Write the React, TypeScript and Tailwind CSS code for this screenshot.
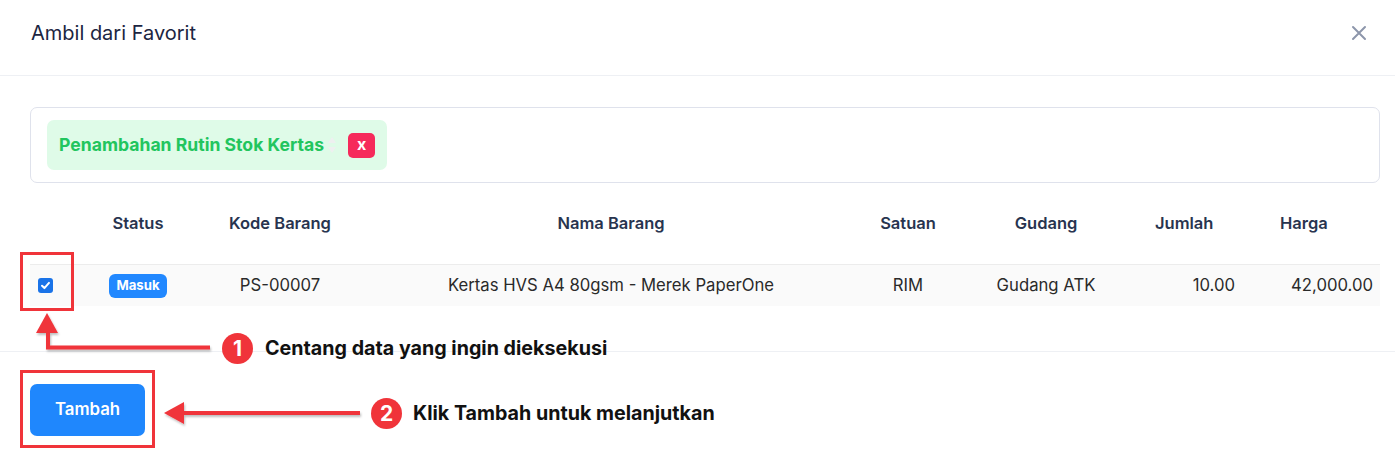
import React from 'react';

const font = { fontFamily: 'Inter, "Noto Sans", sans-serif' };

const Check = () => (
  <div className="w-[15px] h-[15px] rounded-[3px] bg-[#1a73e8] flex items-center justify-center">
    <svg width="11" height="11" viewBox="0 0 12 12">
      <path d="M2.2 6.3 L4.8 8.8 L9.8 3.2" fill="none" stroke="#fff" strokeWidth="2.2" strokeLinecap="round" strokeLinejoin="round" />
    </svg>
  </div>
);

const Step = ({ n }: { n: number }) => (
  <div className="w-[31px] h-[31px] rounded-full bg-[#f0343a] text-white flex items-center justify-center text-[21px] font-bold leading-none">
    {n}
  </div>
);

export default function App() {
  return (
    <div className="relative w-full h-[455px] bg-white overflow-hidden" style={font}>
      {/* header */}
      <div className="h-[76px] border-b border-[#eef0f4] flex items-start justify-between pl-[31px] pr-[27px] pt-[19px]">
        <h2 className="text-[20px] leading-[28px] text-[#1c2541]">Ambil dari Favorit</h2>
        <svg width="18" height="18" viewBox="0 0 18 18" className="mt-[5px]">
          <path d="M3 3 L15 15 M15 3 L3 15" stroke="#8d96ab" strokeWidth="2" strokeLinecap="round" />
        </svg>
      </div>

      {/* body */}
      <div className="pl-[30px] pr-[15px] pt-[31px]">
        <div className="h-[76px] rounded-[7px] border border-[#dfe2ec] pl-[16px] pt-[12px]">
          <div className="inline-flex items-center h-[50px] rounded-[7px] bg-[#dffbe8] pl-[12px] pr-[12px]">
            <span className="text-[17.6px] font-bold text-[#22c55e]">Penambahan Rutin Stok Kertas</span>
            <svg width="10" height="20" viewBox="0 0 10 20" className="ml-[3px] mr-[11px]">
              <path d="M5 2 L9 8 L1 8 Z M5 18 L9 12 L1 12 Z" fill="#eef0f0" />
            </svg>
            <button className="w-[27px] h-[25px] rounded-[5px] bg-[#f62a5b] text-white text-[16px] font-bold leading-none flex items-center justify-center pb-[2px]">
              x
            </button>
          </div>
        </div>

        {/* table */}
        <div className="flex items-center h-[81px] text-[16.5px] font-semibold text-[#28344f]">
          <div className="w-[30px]" />
          <div className="w-[156px] text-center">Status</div>
          <div className="w-[128px] text-center">Kode Barang</div>
          <div className="w-[534px] text-center">Nama Barang</div>
          <div className="w-[60px] text-center">Satuan</div>
          <div className="w-[216px] text-center">Gudang</div>
          <div className="w-[91px] pl-[1px]">Jumlah</div>
          <div className="w-[135px] pl-[35px]">Harga</div>
        </div>
        <div className="flex items-center h-[42px] bg-[#fafafa] border-t border-[#ececec] text-[16.7px] text-[#2a2a2a]">
          <div className="w-[30px] flex justify-center pl-[1px]">
            <Check />
          </div>
          <div className="w-[156px] flex justify-center">
            <span className="h-[24px] w-[58px] rounded-[6px] bg-[#2188ff] text-white text-[13.2px] font-bold flex items-center justify-center">
              Masuk
            </span>
          </div>
          <div className="w-[128px] text-center">PS-00007</div>
          <div className="w-[534px] text-center">Kertas HVS A4 80gsm - Merek PaperOne</div>
          <div className="w-[60px] text-center">RIM</div>
          <div className="w-[216px] text-center">Gudang ATK</div>
          <div className="w-[91px] text-right pr-[10px]">10.00</div>
          <div className="w-[135px] text-right pr-[7px]">42,000.00</div>
        </div>
      </div>

      {/* footer */}
      <div className="mt-[45px] border-t border-[#eef0f4] pl-[30px] pt-[32px]">
        <button className="w-[115px] h-[52px] rounded-[7px] bg-[#1f87fd] text-white text-[16.8px] font-semibold">
          Tambah
        </button>
      </div>

      {/* annotations */}
      <svg className="absolute left-0 top-0 pointer-events-none" width="1395" height="455">
        <defs>
          <filter id="sh" x="-10%" y="-50%" width="120%" height="200%">
            <feDropShadow dx="1" dy="2" stdDeviation="1.2" floodColor="#000" floodOpacity="0.25" />
          </filter>
        </defs>
        <rect x="21.5" y="253.5" width="51" height="56" fill="none" stroke="#f0343a" strokeWidth="3" />
        <rect x="21.5" y="371.5" width="132" height="75" fill="none" stroke="#f0343a" strokeWidth="3" />
        <g filter="url(#sh)" fill="#f0343a" stroke="#f0343a">
          <polygon points="47,313 36,333 58,333" strokeWidth="0" />
          <path d="M48 333 L48 347.5 L210 347.5" fill="none" strokeWidth="4" />
          <polygon points="164,413 184,402 184,424" strokeWidth="0" />
          <path d="M184 413 L360 413" fill="none" strokeWidth="4" />
        </g>
      </svg>
      <div className="absolute left-[222px] top-[333px] flex items-center gap-[12px]">
        <Step n={1} />
        <span className="text-[19.7px] font-bold text-[#111]">Centang data yang ingin dieksekusi</span>
      </div>
      <div className="absolute left-[371px] top-[398px] flex items-center gap-[11px]">
        <Step n={2} />
        <span className="text-[19.7px] font-bold text-[#111]">Klik Tambah untuk melanjutkan</span>
      </div>
    </div>
  );
}
